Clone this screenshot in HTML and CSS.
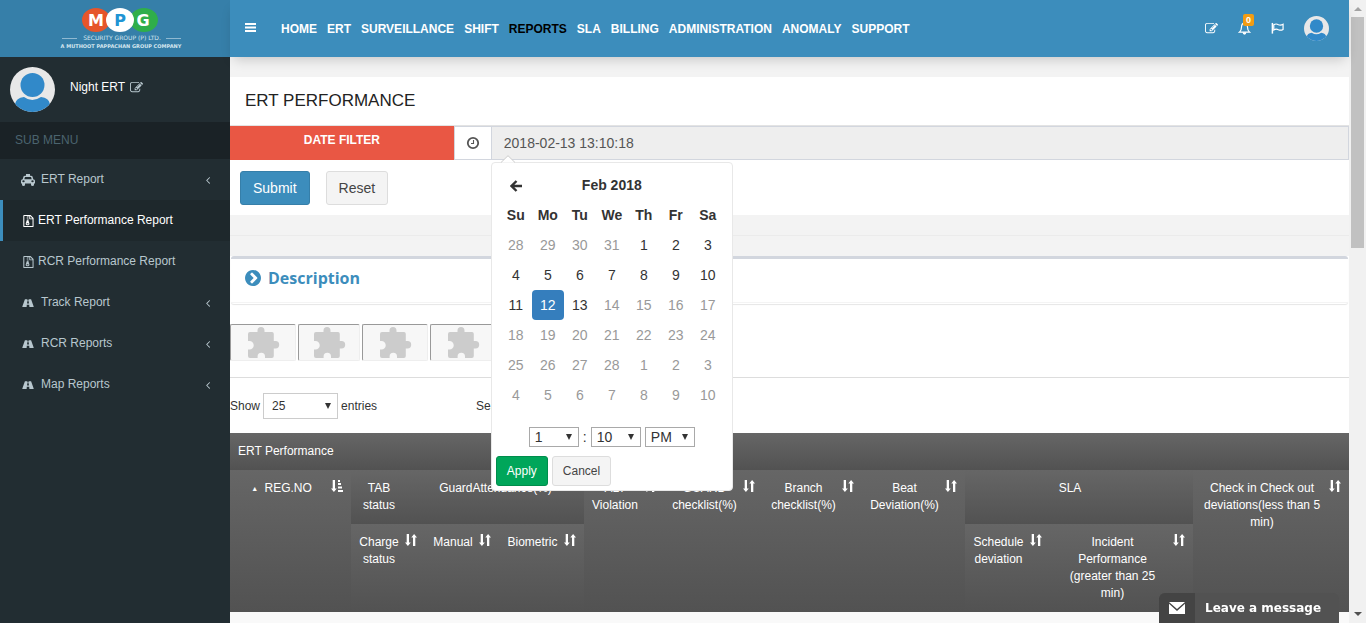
FILE: index.html
```html
<!DOCTYPE html>
<html lang="en">
<head>
<meta charset="utf-8">
<title>ERT Performance</title>
<link rel="stylesheet" href="styles.css">
</head>
<body>
<svg class="sprite" aria-hidden="true">
  <symbol id="edit" viewBox="0 0 1792 1792"><path d="M888 1184l116-116-152-152-116 116v56h96v96h56zm440-720q-16-16-33 1l-350 350q-17 17-1 33t33-1l350-350q17-17 1-33zm80 594v190q0 119-84.500 203.500t-203.500 84.500h-832q-119 0-203.500-84.500t-84.500-203.500v-832q0-119 84.500-203.500t203.500-84.500h832q63 0 117 25 15 7 18 23 3 17-9 29l-49 49q-14 14-32 8-23-6-45-6h-832q-66 0-113 47t-47 113v832q0 66 47 113t113 47h832q66 0 113-47t47-113v-126q0-13 9-22l64-64q15-15 35-7t20 29zm-96-738l288 288-672 672h-288v-288zm444 132l-92 92-288-288 92-92q28-28 68-28t68 28l152 152q28 28 28 68t-28 68z"/></symbol>
  <symbol id="angle" viewBox="0 0 1792 1792"><path d="M1203 544q0 13-10 23l-393 393 393 393q10 10 10 23t-10 23l-50 50q-10 10-23 10t-23-10l-466-466q-10-10-10-23t10-23l466-466q10-10 23-10t23 10l50 50q10 10 10 23z"/></symbol>
  <symbol id="archive" viewBox="-1 0 13 14"><path fill-rule="evenodd" d="M1 0h7.500L12 3.500V13q0 1-1 1H1q-1 0-1-1V1q0-1 1-1zM1.200 1.200v11.600h9.600V5H7.500Q7 5 7 4.500V1.200H6v1H5v-1zM8 1.300V4h2.700zM4 2h1v1H4zm1 1h1v1H5zM4 4h1v1H4zm1 1h1v1H5zM4 6h2l1.200 4.200q.2 1.800-2.200 1.800T2.800 10.200zm1 3.500q-1.200 0-1.200.7t1.200.7 1.200-.7-1.200-.7z"/></symbol>
  <symbol id="road" viewBox="0 0 14 14"><path fill-rule="evenodd" d="M3.400 2.500h2.900L6.200 4h1.600l-.1-1.500h2.900L13.600 11q.2.800-.5.800H8.600L8.400 9H5.600l-.2 2.800H.9q-.7 0-.5-.8zM6.100 5L5.900 7.500h2.200L7.900 5z"/></symbol>
  <symbol id="taxi" viewBox="0 0 14 14" preserveAspectRatio="none"><path fill-rule="evenodd" d="M5 0h4v2h1q1.200 0 1.500 1l.8 3H12q2 0 2 2v3h-1v1.500q0 1.500-1.500 1.500T10 12.500V11H4v1.500Q4 14 2.500 14T1 12.500V11H0V8q0-2 1.700-2l.8-3Q2.800 2 4 2h1zM4 3.500L3.300 6h7.400L10 3.500zM2.500 7.300a1.200 1.200 0 100 2.400 1.200 1.200 0 000-2.400zm9 0a1.200 1.200 0 100 2.400 1.200 1.200 0 000-2.400z"/></symbol>
  <symbol id="puzzle" viewBox="0 0 33 33"><path d="M2 6h8.500V4.500a3.500 3.500 0 017 0V6H25q1.800 0 1.800 2v7h1.700a3.700 3.700 0 010 7.400h-1.700V30q0 2-2 2H18v-1.500a3.700 3.700 0 00-7.400 0V32H3q-2 0-2-2v-6.500h1.500a4 4 0 000-8.500H1V8q0-2 2-2z"/></symbol>
  <symbol id="sort" viewBox="0 0 12 12"><path d="M1.700 0h2.300v8.400h1.800L2.900 12 0 8.400h1.700zM8 12h2.300V3.600H12L9.100 0 6.300 3.600H8z"/></symbol>
  <symbol id="sort-asc" viewBox="0 0 12 12"><path d="M1.700 0h2.300v8.400h1.800L2.900 12 0 8.400h1.700zM7 0h2v2H7zm0 3h3v2H7zm0 3.500h4v2H7zM7 10h5v2H7z"/></symbol>
  <symbol id="avatar" viewBox="0 0 45 45"><clipPath id="disc"><circle cx="22.500" cy="22.500" r="22.500"/></clipPath><g clip-path="url(#disc)"><path fill="#e8e8e8" d="M0 0h45v45H0z"/><circle cx="22.500" cy="18" r="12" fill="#3189c9"/><path fill="#3189c9" d="M5 37q1-6 9-7 8 6 17 0 8 1 9 7v8H5z"/></g></symbol>
</svg>

<div class="app">
  <aside class="sidebar">
    <a class="brand" href="#" aria-label="MPG Security Group">
      <svg class="logo" width="124" height="46" viewBox="0 0 124 46">
        <ellipse cx="36" cy="15" rx="14" ry="12" fill="#e6552b"/>
        <ellipse cx="84" cy="15" rx="14" ry="12" fill="#2fae4a"/>
        <ellipse cx="60" cy="15" rx="14" ry="12" fill="#fff"/>
        <g font-family="DejaVu Sans, sans-serif" font-weight="bold" text-anchor="middle" font-size="16">
          <text x="36" y="21" fill="#fff">M</text><text x="60" y="21" fill="#2094d4">P</text><text x="83" y="21" fill="#fff">G</text>
        </g>
        <path d="M2 33.500h15M106 33.500h15" stroke="#8fb9d1"/>
        <g fill="#d5e6ef" font-family="DejaVu Sans, sans-serif" text-anchor="middle">
          <text x="62" y="35" font-size="6">SECURITY GROUP (P) LTD.</text>
          <text x="61" y="43" font-size="5" font-weight="bold">A MUTHOOT PAPPACHAN GROUP COMPANY</text>
        </g>
      </svg>
    </a>
    <div class="user">
      <svg class="user-photo"><use href="#avatar"/></svg>
      <a class="user-name" href="#">Night ERT <svg class="icon"><use href="#edit"/></svg></a>
    </div>
    <div class="menu-title">SUB MENU</div>
    <nav class="menu">
      <a class="menu-item" href="#"><svg class="icon"><use href="#taxi"/></svg><span>ERT Report</span><svg class="arrow"><use href="#angle"/></svg></a>
      <a class="menu-item tight active" href="#"><svg class="icon"><use href="#archive"/></svg><span>ERT Performance Report</span></a>
      <a class="menu-item tight" href="#"><svg class="icon"><use href="#archive"/></svg><span>RCR Performance Report</span></a>
      <a class="menu-item" href="#"><svg class="icon"><use href="#road"/></svg><span>Track Report</span><svg class="arrow"><use href="#angle"/></svg></a>
      <a class="menu-item" href="#"><svg class="icon"><use href="#road"/></svg><span>RCR Reports</span><svg class="arrow"><use href="#angle"/></svg></a>
      <a class="menu-item" href="#"><svg class="icon"><use href="#road"/></svg><span>Map Reports</span><svg class="arrow"><use href="#angle"/></svg></a>
    </nav>
  </aside>

  <main class="main">
    <header class="topbar">
      <button class="toggle" type="button" aria-label="Toggle menu"><svg width="11" height="9" viewBox="0 0 11 9"><path fill="#fff" d="M0 0h11v2H0zM0 3.500h11v2H0zM0 7h11v2H0z"/></svg></button>
      <nav class="nav">
        <a href="#">HOME</a><a href="#">ERT</a><a href="#">SURVEILLANCE</a><a href="#">SHIFT</a><a class="current" href="#">REPORTS</a><a href="#">SLA</a><a href="#">BILLING</a><a href="#">ADMINISTRATION</a><a href="#">ANOMALY</a><a href="#">SUPPORT</a>
      </nav>
      <div class="tools">
        <a href="#" aria-label="Edit"><svg class="tool-icon"><use href="#edit"/></svg></a>
        <a class="bell" href="#" aria-label="Notifications"><svg class="tool-icon" viewBox="0 0 14 14"><path d="M7 1q-3.200.6-3.200 4.500 0 3.800-2.300 5.500h11q-2.300-1.700-2.300-5.500Q10.200 1.600 7 1z" fill="none" stroke="#fff" stroke-width="1.300"/><path d="M5 11h4q0 2.600-2 2.600T5 11z"/></svg><span class="badge">0</span></a>
        <a href="#" aria-label="Flags"><svg class="tool-icon" viewBox="0 0 14 14"><path d="M1.500 1v11.500" fill="none" stroke="#fff" stroke-width="1.600"/><path d="M3 3q2.500-1.700 5 0 2.500 1 5-.5V8q-2.500 1.500-5 .3-2.500-1.500-5 .2z" fill="none" stroke="#fff" stroke-width="1.300"/></svg></a>
        <a href="#" aria-label="Account"><svg class="tool-photo"><use href="#avatar"/></svg></a>
      </div>
    </header>

    <section class="filter-box">
      <h1 class="page-title">ERT PERFORMANCE</h1>
      <form>
        <div class="filter-row">
          <label class="filter-label" for="date">DATE FILTER</label>
          <span class="addon"><svg width="14" height="14" viewBox="0 0 14 14"><circle cx="7" cy="7" r="5.200" fill="none" stroke="#555" stroke-width="1.800"/><path d="M7.500 4v3.500H5" fill="none" stroke="#555" stroke-width="1.100"/></svg></span>
          <div class="date-wrap">
            <input class="date" id="date" type="text" value="2018-02-13 13:10:18" readonly>
            <div class="picker">
              <svg class="caret" width="14" height="8" viewBox="0 0 14 8"><path d="M0 7.500L7 .700l7 6.800" fill="#fff" stroke="#ccc"/></svg>
              <table class="calendar">
                <thead>
                  <tr><th><svg width="12" height="12" viewBox="0 0 12 12"><path d="M6.500 1L1.500 6l5 5M2 6h10" fill="none" stroke="#333" stroke-width="2.400"/></svg></th><th colspan="5">Feb 2018</th><th></th></tr>
                  <tr><th>Su</th><th>Mo</th><th>Tu</th><th>We</th><th>Th</th><th>Fr</th><th>Sa</th></tr>
                </thead>
                <tbody>
                  <tr><td class="off">28</td><td class="off">29</td><td class="off">30</td><td class="off">31</td><td>1</td><td>2</td><td>3</td></tr>
                  <tr><td>4</td><td>5</td><td>6</td><td>7</td><td>8</td><td>9</td><td>10</td></tr>
                  <tr><td>11</td><td class="selected">12</td><td>13</td><td class="off">14</td><td class="off">15</td><td class="off">16</td><td class="off">17</td></tr>
                  <tr class="off"><td>18</td><td>19</td><td>20</td><td>21</td><td>22</td><td>23</td><td>24</td></tr>
                  <tr class="off"><td>25</td><td>26</td><td>27</td><td>28</td><td>1</td><td>2</td><td>3</td></tr>
                  <tr class="off"><td>4</td><td>5</td><td>6</td><td>7</td><td>8</td><td>9</td><td>10</td></tr>
                </tbody>
              </table>
              <div class="time">
                <select aria-label="Hour"><option>1</option></select>
                <span class="colon">:</span>
                <select aria-label="Minute"><option>10</option></select>
                <select class="meridiem" aria-label="AM or PM"><option>PM</option></select>
              </div>
              <div class="picker-actions">
                <button class="btn small apply" type="button">Apply</button>
                <button class="btn small" type="button">Cancel</button>
              </div>
            </div>
          </div>
        </div>
        <div class="form-actions">
          <button class="btn primary" type="submit">Submit</button>
          <button class="btn" type="reset">Reset</button>
        </div>
      </form>
    </section>
    <hr class="divider">

    <section class="description">
      <h2><svg width="16" height="16" viewBox="128 128 1536 1536"><path fill="#3c8dbc" d="M845 1395l454-454q19-19 19-45t-19-45l-454-454q-19-19-45-19t-45 19l-102 102q-19 19-19 45t19 45l307 307-307 307q-19 19-19 45t19 45l102 102q19 19 45 19t45-19zm819-499q0 209-103 385.500t-279.500 279.500-385.500 103-385.500-103-279.500-279.500-103-385.500 103-385.500 279.500-279.500 385.500-103 385.500 103 279.500 279.500 103 385.500z"/></svg>Description</h2>
    </section>

    <div class="plugins">
      <div class="plugin"><svg><use href="#puzzle"/></svg></div>
      <div class="plugin narrow"><svg><use href="#puzzle"/></svg></div>
      <div class="plugin"><svg><use href="#puzzle"/></svg></div>
      <div class="plugin"><svg><use href="#puzzle"/></svg></div>
    </div>

    <div class="table-tools">
      <label class="length">Show <select><option>25</option></select> entries</label>
      <label class="search">Search: <input type="search"></label>
    </div>

    <table class="report">
      <colgroup><col class="w-reg"><col class="w-s"><col class="w-s"><col class="w-m"><col class="w-alt"><col class="w-l"><col class="w-l"><col class="w-beat"><col class="w-m"><col class="w-inc"><col class="w-check"></colgroup>
      <thead>
        <tr><th class="caption" colspan="11">ERT Performance</th></tr>
        <tr>
          <th rowspan="2"><div class="head"><span><small>▲</small> REG.NO</span><svg><use href="#sort-asc"/></svg></div></th>
          <th class="plain">TAB status</th>
          <th class="plain" colspan="2">GuardAttendance(%)</th>
          <th rowspan="2"><div class="head"><span>ALT Violation</span><svg><use href="#sort"/></svg></div></th>
          <th rowspan="2"><div class="head"><span>GUARD checklist(%)</span><svg><use href="#sort"/></svg></div></th>
          <th rowspan="2"><div class="head"><span>Branch checklist(%)</span><svg><use href="#sort"/></svg></div></th>
          <th rowspan="2"><div class="head"><span>Beat Deviation(%)</span><svg><use href="#sort"/></svg></div></th>
          <th class="plain" colspan="2">SLA</th>
          <th rowspan="2"><div class="head"><span>Check in Check out deviations(less than 5 min)</span><svg><use href="#sort"/></svg></div></th>
        </tr>
        <tr>
          <th><div class="head"><span>Charge status</span><svg><use href="#sort"/></svg></div></th>
          <th><div class="head"><span>Manual</span><svg><use href="#sort"/></svg></div></th>
          <th><div class="head"><span>Biometric</span><svg><use href="#sort"/></svg></div></th>
          <th><div class="head"><span>Schedule deviation</span><svg><use href="#sort"/></svg></div></th>
          <th><div class="head"><span>Incident Performance (greater than 25 min)</span><svg><use href="#sort"/></svg></div></th>
        </tr>
      </thead>
      <tbody><tr><td colspan="11"></td></tr></tbody>
    </table>
  </main>

  <div class="scrollbar" aria-hidden="true">
    <svg width="8" height="4" viewBox="0 0 8 4"><path fill="#a3a3a3" d="M0 4l4-4 4 4z"/></svg>
    <div class="thumb"></div>
    <svg width="8" height="4" viewBox="0 0 8 4"><path fill="#505050" d="M0 0l4 4 4-4z"/></svg>
  </div>
</div>

<button class="chat" type="button">
  <span class="chat-icon"><svg width="16" height="12" viewBox="0 0 16 12"><path fill="#fff" d="M0 0h16L8 7zM0 1.800L8 9l8-7.200V12H0z"/></svg></span>
  <span class="chat-text">Leave a message</span>
</button>
</body>
</html>
```

FILE: styles.css
```css
* { box-sizing: border-box; }
body {
  margin: 0;
  font: 12px/17px "Liberation Sans", Arial, sans-serif;
  color: #333;
  background: #fff;
}
a { color: inherit; text-decoration: none; }
button, input, select { font: inherit; color: inherit; }
svg { display: block; fill: currentColor; }
.sprite { position: absolute; width: 0; height: 0; }

.app { display: grid; grid-template-columns: 230px minmax(0, 1fr) 17px; grid-template-rows: 100%; height: 100vh; overflow: hidden; }

/* Sidebar */
.sidebar { background: #222d32; color: #b8c7ce; }
.brand { display: flex; justify-content: center; height: 57px; padding: 5px 0 0 14px; background: #367fa9; }
.user { display: flex; gap: 15px; height: 65px; padding: 10px; color: #fff; }
.user-photo { width: 45px; height: 45px; }
.user-name { display: flex; gap: 5px; align-items: center; height: 40px; }
.user-name .icon { width: 13px; height: 13px; color: #b8c7ce; }
.menu-title { padding: 10px 15px; color: #4b646f; background: #1a2226; }
.menu-item { display: flex; align-items: center; gap: 6px; height: 41px; padding: 0 16px 0 18px; border-left: 3px solid transparent; }
.menu-item .icon { width: 14px; height: 12px; }
.menu-item.tight { gap: 3px; }
.menu-item.active { color: #fff; background: #1e282c; border-left-color: #3c8dbc; }
.menu-item .arrow { width: 12px; height: 12px; margin-left: auto; }

/* Top bar */
.topbar { position: relative; display: flex; align-items: center; height: 57px; padding: 0 20px 0 15px; color: #fff; background: #3c8dbc; box-shadow: 0 6px 12px -4px rgba(0, 0, 0, .2); }
.toggle { padding: 0 0 2px; margin-right: 25px; border: 0; background: none; }
.nav { display: flex; gap: 10px; padding-top: 1px; font-weight: bold; }
.nav .current { color: #000; }
.tools { display: flex; align-items: center; gap: 20px; margin-left: auto; }
.tool-icon { width: 13px; height: 13px; }
.tool-photo { width: 25px; height: 25px; }
.bell { position: relative; }
.badge { position: absolute; left: 5px; top: -8px; width: 11px; height: 12px; font: bold 9px/12px "Liberation Sans", Arial, sans-serif; text-align: center; background: #f39c12; border-radius: 2px; }

/* Filter */
.main { background: #fff; }
.filter-box { border-top: 20px solid #f3f3f3; }
.page-title { margin: 0; padding: 12px 15px; height: 49px; font-size: 17px; line-height: 23px; font-weight: normal; color: #222; border-bottom: 1px solid #e3e3e3; }
.filter-row { display: grid; grid-template-columns: 20% 37px minmax(0, 1fr); height: 34px; }
.filter-label { padding-top: 6px; color: #fff; font-weight: bold; text-align: center; background: #e95744; }
.addon { display: flex; align-items: center; justify-content: center; border: 1px solid #d2d6de; border-right: 0; }
.date-wrap { position: relative; }
.date { width: 100%; height: 34px; padding: 6px 12px; border: 1px solid #d2d6de; border-radius: 0; outline: 0; font-size: 14px; color: #555; background: #eee; }
.form-actions { display: flex; gap: 16px; padding: 11px 10px 10px; }
.btn { padding: 6px 12px; border: 1px solid #ddd; border-radius: 3px; font-size: 14px; line-height: 20px; color: #444; background: #f4f4f4; }
.btn.primary { color: #fff; background: #3c8dbc; border-color: #367fa9; }
.btn.small { padding: 5px 10px; font-size: 12px; line-height: 18px; }
.btn.apply { color: #fff; background: #00a65a; border-color: #008d4c; }
.divider { height: 41px; margin: 0; border: 0; background: linear-gradient(#ebebeb, #ebebeb) 0 20px / 100% 1px no-repeat #f3f3f3; }

/* Date picker */
.picker { position: absolute; z-index: 2; left: 0; top: 36px; width: 242px; padding: 7px 8px 4px 4px; font-size: 14px; line-height: 20px; background: #fff; border: 1px solid #e8e8e8; border-radius: 4px; }
.caret { position: absolute; left: 9px; top: -8px; }
.calendar { margin-left: 4px; border-collapse: collapse; table-layout: fixed; width: 224px; }
.calendar th, .calendar td { height: 30px; padding: 0; text-align: center; }
.calendar th svg { margin: 2px auto 0; }
.calendar .off { color: #999; }
.calendar .selected { color: #fff; background: #357ebd; border-radius: 4px; }
.time { display: flex; gap: 5px; padding: 17px 0 9px 33px; }
.time .colon { width: 3px; }
.time select, .length select {
  appearance: none;
  width: 50px;
  height: 20px;
  padding: 0 5px;
  line-height: 18px;
  border: 1px solid #a9a9a9;
  border-radius: 0;
  background: #fff url("data:image/svg+xml,%3Csvg xmlns='http://www.w3.org/2000/svg' width='6' height='6'%3E%3Cpath fill='%23333' d='M0 0h6L3 6z'/%3E%3C/svg%3E") right 6px center no-repeat;
}
.time select { margin-right: -1px; }
.picker-actions { display: flex; gap: 4px; }

/* Description */
.description { margin: 0 1px; border-top: 3px solid #d2d6de; border-radius: 3px; box-shadow: 0 1px 1px rgba(0, 0, 0, .1); padding-bottom: 1px; }
.description h2 { display: flex; align-items: center; gap: 7px; margin: 0; padding: 7px 14px 12px; font: bold 16px/24px "Open Sans", "Noto Sans", sans-serif; color: #3c8dbc; border-bottom: 1px solid #f4f4f4; }

/* Blocked plugin tiles */
.plugins { display: flex; gap: 2px; padding: 20px 0 16px; border-bottom: 1px solid #ddd; }
.plugin { display: flex; justify-content: center; width: 66px; height: 37px; padding-top: 1px; color: #ccc; background: #f7f7f7; border: 1px solid #eee; border-top-color: #999; border-left-color: #999; border-radius: 2px; }
.plugin.narrow { width: 62px; }
.plugin svg { width: 33px; height: 33px; }

.table-tools { display: grid; grid-template-columns: 246px 1fr; padding: 15px 0 14px; }
.length { display: flex; align-items: center; gap: 3px; }
.length select { width: 75px; height: 26px; padding: 0 8px; border-color: #ccc; }
.search { display: flex; align-items: center; gap: 4px; }
.search input { width: 150px; height: 26px; border: 1px solid #ccc; }

/* Report */
.report { width: 100%; table-layout: fixed; border-collapse: collapse; color: #fff; }
.report th { padding: 10px 8px; font-weight: normal; text-align: center; vertical-align: top; background: linear-gradient(#666, #525252); }
.report th.plain { padding-right: 26px; }
.report th.caption { text-align: left; }
.report td { height: 37px; background: #f9f9f9; }
.report small { font-size: 7px; vertical-align: middle; margin-right: 3px; }
.head { display: flex; gap: 6px; }
.head span { flex: 1; }
.head svg { flex: none; width: 12px; height: 12px; }
.w-reg { width: 121px; }
.w-s { width: 74px; }
.w-m { width: 85px; }
.w-alt { width: 80px; }
.w-l { width: 99px; }
.w-beat { width: 103px; }
.w-inc { width: 143px; }
.w-check { width: 156px; }

/* Page scroll track */
.scrollbar { display: flex; flex-direction: column; align-items: center; padding: 7px 2px; background: #f1f1f1; }
.scrollbar .thumb { width: 13px; height: 38%; margin: 6px 0 auto; background: #c1c1c1; }

/* Chat */
.chat { position: fixed; z-index: 3; right: 27px; bottom: 0; display: flex; width: 180px; height: 30px; padding: 0; border: 0; border-radius: 6px 6px 0 0; overflow: hidden; color: #fff; background: #525252; font: bold 12px/30px "DejaVu Sans", Verdana, sans-serif; }
.chat-icon { display: flex; align-items: center; justify-content: center; width: 36px; height: 30px; background: #444; }
.chat-text { padding-left: 10px; white-space: nowrap; }
```
